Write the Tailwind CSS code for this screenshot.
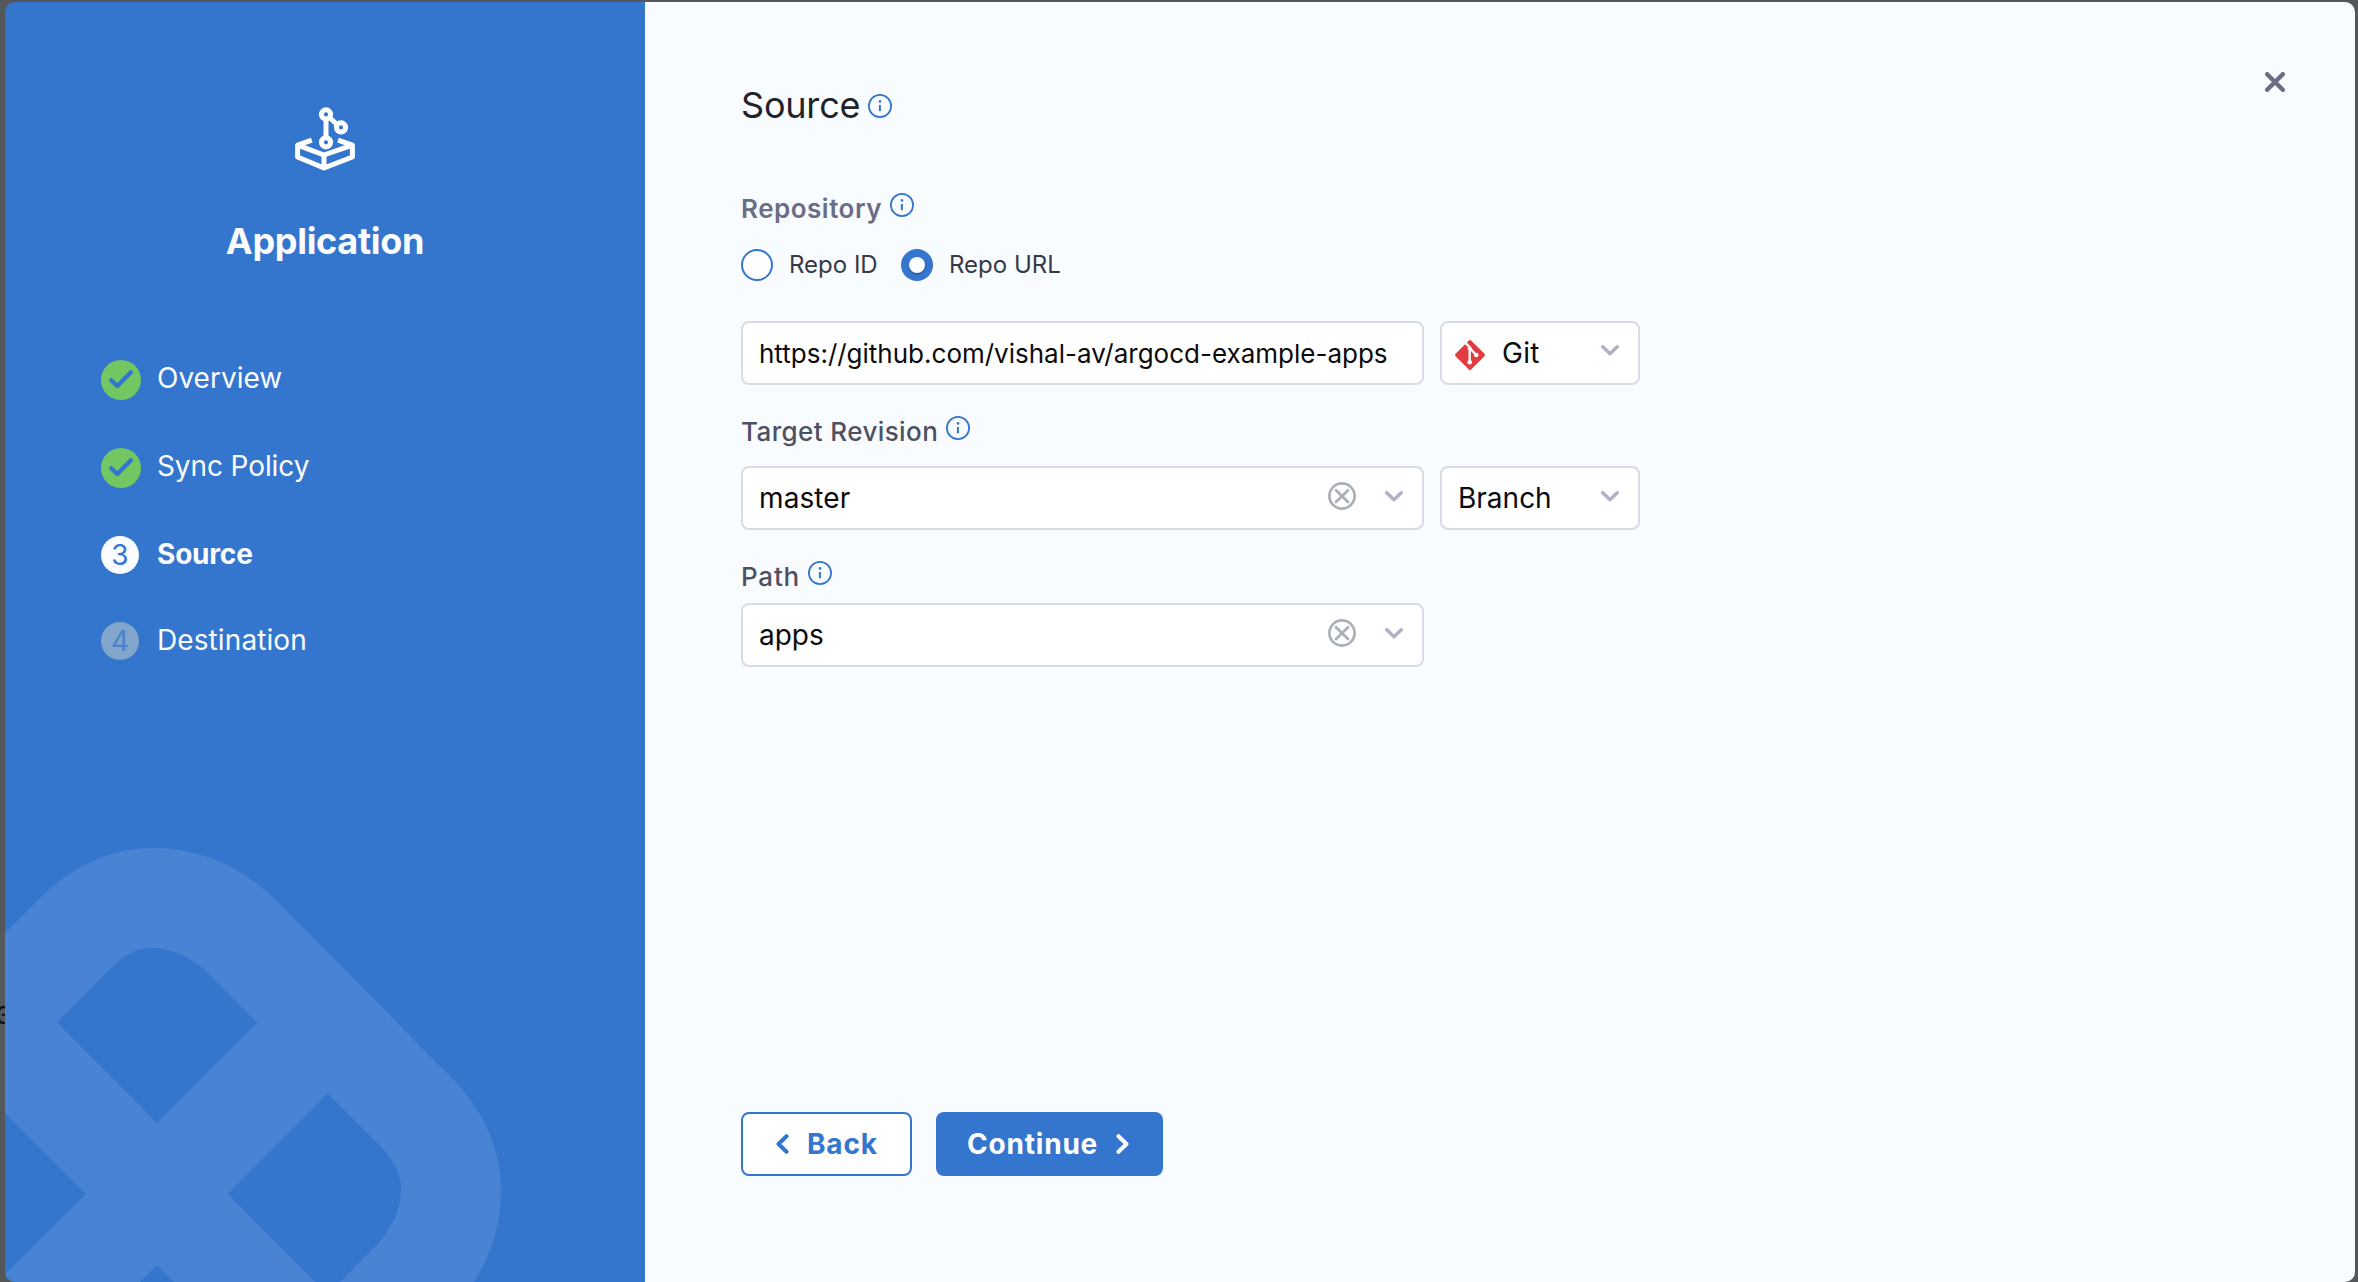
<!DOCTYPE html>
<html lang="en">
<head>
<meta charset="utf-8">
<title>Application - Source</title>
<script src="https://cdn.jsdelivr.net/npm/@tailwindcss/browser@4"></script>
</head>
<body class="relative h-[1282px] w-[2358px] overflow-hidden bg-[#55585b] font-['Inter',sans-serif]">
<svg class="hidden">
  <symbol id="info" viewBox="0 0 24 24"><circle cx="12" cy="12" r="11.1" fill="none" stroke="currentColor" stroke-width="1.8"/><circle cx="12" cy="7.4" r="1.3" fill="currentColor"/><path d="M11.9 11v6.3" fill="none" stroke="currentColor" stroke-width="2"/></symbol>
  <symbol id="chevron" viewBox="0 0 18 11"><path d="M1.8 1.8 9 8.8l7.2-7" fill="none" stroke="currentColor" stroke-width="3.400" stroke-linecap="round" stroke-linejoin="round"/></symbol>
  <symbol id="clear" viewBox="0 0 28 28"><circle cx="14" cy="14" r="12.6" fill="none" stroke="currentColor" stroke-width="2.7"/><path d="M8 8.2 20 20M20 8.2 8 20" fill="none" stroke="currentColor" stroke-width="2.8" stroke-linecap="round"/></symbol>
  <symbol id="check" viewBox="0 0 40 40"><circle cx="20" cy="20" r="20" fill="#73c762"/><path d="M10.2 20.4 16.3 26 29.8 12.3" fill="none" stroke="#3476ce" stroke-width="4.4" stroke-linecap="round" stroke-linejoin="round"/></symbol>
</svg>
<span class="absolute -left-[4px] top-[1003px] text-[24px] font-medium leading-[26px] text-[#111318]">3</span>
<div class="absolute left-[5px] top-[2px] flex h-[1280px] w-[2350px] overflow-hidden rounded-[10px]">
  <aside class="relative h-full w-[640px] shrink-0 bg-[#3476ce] text-[#fafcff]">
    <svg class="absolute bottom-0 left-0 h-[440px] w-[520px]" viewBox="5 842 520 440" fill="#4883d4" fill-rule="evenodd">
      <path d="M5 933 38 900C72 866 110 848 155 848C199 848 242 866 278 902L449 1075C482 1108 501 1147 501 1190C501 1225 491 1255 474 1282H340L376 1246C391 1230 401 1209 401 1190C401 1175 395 1161 379 1145L327.500 1093.500 227.500 1194 315 1282H174L157 1265 140 1282H5V1274L86 1194 5 1113Z M57 1022.500 157 1123 257 1022.500 209 974C192 957 171 948 154 948C139 948 126 953 112 967Z"/>
    </svg>
    <div class="relative flex flex-col items-center pt-[104px]">
      <svg class="h-[66px] w-[64px]" viewBox="293 106 64 66" fill="none" stroke="#fff" stroke-width="5" stroke-linejoin="round">
        <circle cx="326" cy="114.400" r="4.600"/><circle cx="341" cy="127.400" r="4.600"/><circle cx="326" cy="142.300" r="4.600"/>
        <path d="M326 119v19M329.500 117.500 337.500 125M311.800 140.200 297.600 145.200V157L324 168 352.400 157V145.200L338 140.200M297.600 145.200 324 155 352.400 145.200M324 155v13"/>
      </svg>
      <h2 class="mt-[47px] text-[36px] font-bold leading-[44px] tracking-[-0.3px]">Application</h2>
    </div>
    <ol class="relative mt-[97px] flex flex-col pl-[96px] text-[28px] leading-[40px]">
      <li class="flex h-[88px] gap-[16px]"><svg class="size-[40px]"><use href="#check"/></svg><span class="-mt-[2px]">Overview</span></li>
      <li class="flex h-[88px] gap-[16px]"><svg class="size-[40px]"><use href="#check"/></svg><span class="-mt-[2px] tracking-[-0.1px]">Sync Policy</span></li>
      <li class="flex h-[86px] gap-[18px]"><span class="size-[38px] rounded-full bg-[#fafcff] text-center leading-[39px] text-[#3476ce]">3</span><span class="-mt-[2px] font-bold tracking-[-0.2px]">Source</span></li>
      <li class="flex h-[86px] gap-[18px]"><span class="size-[38px] rounded-full bg-[#82a5cc] text-center leading-[39px] text-[#4a83cf]">4</span><span class="-mt-[2px] tracking-[0.1px]">Destination</span></li>
    </ol>
  </aside>
  <main class="relative grow bg-[#f9fcff] pl-[96px] pt-[82px] text-[#0b0b0d]">
    <button class="absolute right-[70px] top-[70px]" aria-label="Close"><svg class="size-[20px]" viewBox="0 0 20 20" fill="none" stroke="#6b6d85" stroke-width="4.400" stroke-linecap="round"><path d="M2.200 2.200 17.800 17.800M17.800 2.200 2.200 17.800"/></svg></button>
    <h1 class="flex h-[44px] items-center gap-[8px] text-[36px] tracking-[-0.2px] text-[#22222a]"><span class="-mt-[2px]">Source</span><svg class="size-[24px] text-[#3476ce]"><use href="#info"/></svg></h1>
    <div class="mt-[65px] flex h-[32px] gap-[8px] text-[26px] font-semibold leading-[32px] tracking-[0.5px] text-[#6b6d85]">Repository <svg class="size-[24px] text-[#3476ce]"><use href="#info"/></svg></div>
    <div class="mt-[23px] flex h-[34px] items-center text-[24px] text-[#383946]">
      <span class="size-[32px] rounded-full border-2 border-[#3476ce] bg-white"></span><span class="ml-[16px] w-[112px]">Repo ID</span>
      <span class="flex size-[32px] items-center justify-center rounded-full bg-[#3476ce]"><span class="size-[16px] rounded-full bg-white shadow-[0_1px_2px_rgba(16,22,26,0.4)]"></span></span><span class="ml-[16px]">Repo URL</span>
    </div>
    <div class="mt-[39px] flex gap-[16px]">
      <div class="flex h-[64px] w-[683px] items-center rounded-[8px] border-2 border-[#d9dae5] bg-white pl-[16px] text-[26px]">https://github.com/vishal-av/argocd-example-apps</div>
      <div class="flex h-[64px] w-[200px] items-center rounded-[8px] border-2 border-[#d9dae5] bg-white pl-[12px] pr-[19px] text-[28px]">
        <svg class="mt-[4px] size-[32px]" viewBox="0 0 32 32"><rect x="5" y="5" width="22" height="22" rx="1.600" transform="rotate(45 16 16)" fill="#e23c3f"/><path d="M11.400 3.600 15.700 8.400V23M15.700 9l6.500 7" fill="none" stroke="#fff" stroke-width="2.400"/><circle cx="15.700" cy="9.600" r="2" fill="#fff"/><circle cx="22.200" cy="16" r="2.300" fill="#fff"/><circle cx="15.700" cy="23.300" r="2.300" fill="#fff"/></svg>
        <span class="ml-[16px] grow tracking-[0.3px]">Git</span><svg class="-mt-[5px] h-[11px] w-[18px] text-[#b0b1c4]"><use href="#chevron"/></svg>
      </div>
    </div>
    <div class="mt-[31px] flex h-[32px] gap-[8px] text-[26px] font-medium leading-[32px] tracking-[0.4px] text-[#4f5162]">Target Revision <svg class="size-[24px] text-[#3476ce]"><use href="#info"/></svg></div>
    <div class="mt-[18px] flex gap-[16px] text-[28px]">
      <div class="flex h-[64px] w-[683px] items-center rounded-[8px] border-2 border-[#d9dae5] bg-white pl-[16px] pr-[19px]"><span class="grow tracking-[0.1px]">master</span><svg class="-mt-[4px] mr-[29px] size-[28px] text-[#a9b0b8]"><use href="#clear"/></svg><svg class="-mt-[4px] h-[11px] w-[18px] text-[#b0b1c4]"><use href="#chevron"/></svg></div>
      <div class="flex h-[64px] w-[200px] items-center rounded-[8px] border-2 border-[#d9dae5] bg-white pl-[16px] pr-[19px]"><span class="grow">Branch</span><svg class="-mt-[4px] h-[11px] w-[18px] text-[#b0b1c4]"><use href="#chevron"/></svg></div>
    </div>
    <div class="mt-[31px] flex h-[32px] gap-[8px] text-[26px] font-medium leading-[32px] tracking-[0.8px] text-[#4f5162]">Path <svg class="size-[24px] text-[#3476ce]"><use href="#info"/></svg></div>
    <div class="mt-[10px] flex h-[64px] w-[683px] items-center rounded-[8px] border-2 border-[#d9dae5] bg-white pl-[16px] pr-[19px] text-[28px]"><span class="grow">apps</span><svg class="-mt-[4px] mr-[29px] size-[28px] text-[#a9b0b8]"><use href="#clear"/></svg><svg class="-mt-[4px] h-[11px] w-[18px] text-[#b0b1c4]"><use href="#chevron"/></svg></div>
    <div class="mt-[445px] flex gap-[24px] text-[28px] font-bold tracking-[0.8px]">
      <button class="flex h-[64px] w-[171px] items-center rounded-[8px] border-2 border-[#3476ce] bg-white pl-[33px] text-[#3476ce]"><svg class="h-[20px] w-[13px]" viewBox="0 0 13 20" fill="none" stroke="currentColor" stroke-width="4" stroke-linecap="round" stroke-linejoin="round"><path d="M10.500 2.200 2.500 10l8 7.800"/></svg><span class="ml-[18px]">Back</span></button>
      <button class="flex h-[64px] w-[227px] items-center rounded-[8px] bg-[#3476ce] pl-[31px] text-white"><span class="w-[149px] text-left">Continue</span><svg class="h-[20px] w-[13px]" viewBox="0 0 13 20" fill="none" stroke="currentColor" stroke-width="4" stroke-linecap="round" stroke-linejoin="round"><path d="M2.500 2.200l8 7.800-8 7.800"/></svg></button>
    </div>
  </main>
</div>
</body>
</html>
